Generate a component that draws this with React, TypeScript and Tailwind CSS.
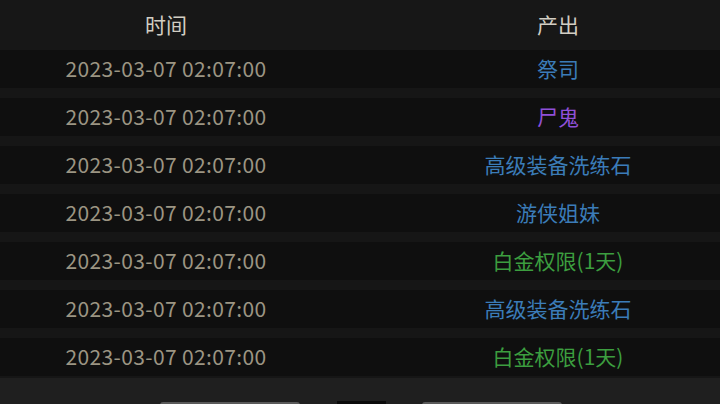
import React from "react";

const rows: { t: string; name: string; color: string }[] = [
  { t: "2023-03-07 02:07:00", name: "祭司", color: "text-[#3b7cb8]" },
  { t: "2023-03-07 02:07:00", name: "尸鬼", color: "text-[#9050d8]" },
  { t: "2023-03-07 02:07:00", name: "高级装备洗练石", color: "text-[#3b7cb8]" },
  { t: "2023-03-07 02:07:00", name: "游侠姐妹", color: "text-[#3b7cb8]" },
  { t: "2023-03-07 02:07:00", name: "白金权限(1天)", color: "text-[#3c9e3f]" },
  { t: "2023-03-07 02:07:00", name: "高级装备洗练石", color: "text-[#3b7cb8]" },
  { t: "2023-03-07 02:07:00", name: "白金权限(1天)", color: "text-[#3c9e3f]" },
];

export default function App() {
  return (
    <div
      className="w-[720px] h-[404px] overflow-hidden bg-[#161616] flex flex-col text-[21px]"
      style={{ fontFamily: '"Noto Sans CJK SC", "Noto Sans", sans-serif' }}
    >
      <div className="h-[50px] shrink-0 flex items-center text-[#d2cec3] bg-[#171717]">
        <div className="w-[332px] text-center">时间</div>
        <div className="w-[64px]" />
        <div className="flex-1 text-center">产出</div>
      </div>
      <div className="flex flex-col gap-[10px]">
        {rows.map((r, i) => (
          <div key={i} className="h-[38px] shrink-0 flex items-center bg-[#0f0f0f]">
            <div className="w-[332px] text-center text-[#9c9583] tracking-[0.37px]">{r.t}</div>
            <div className="w-[64px]" />
            <div className={`flex-1 text-center ${r.color}`}>{r.name}</div>
          </div>
        ))}
      </div>
      <div className="flex-1 mt-[2px] bg-[#1f1f1f] relative">
        <div className="absolute top-[24px] left-[160px] w-[140px] h-[10px] rounded-t-[3px] bg-[#5a5a5a]" />
        <div className="absolute top-[23px] left-[337px] w-[49px] h-[10px] bg-[#0a0a0a]" />
        <div className="absolute top-[24px] left-[422px] w-[140px] h-[10px] rounded-t-[3px] bg-[#5a5a5a]" />
      </div>
    </div>
  );
}
